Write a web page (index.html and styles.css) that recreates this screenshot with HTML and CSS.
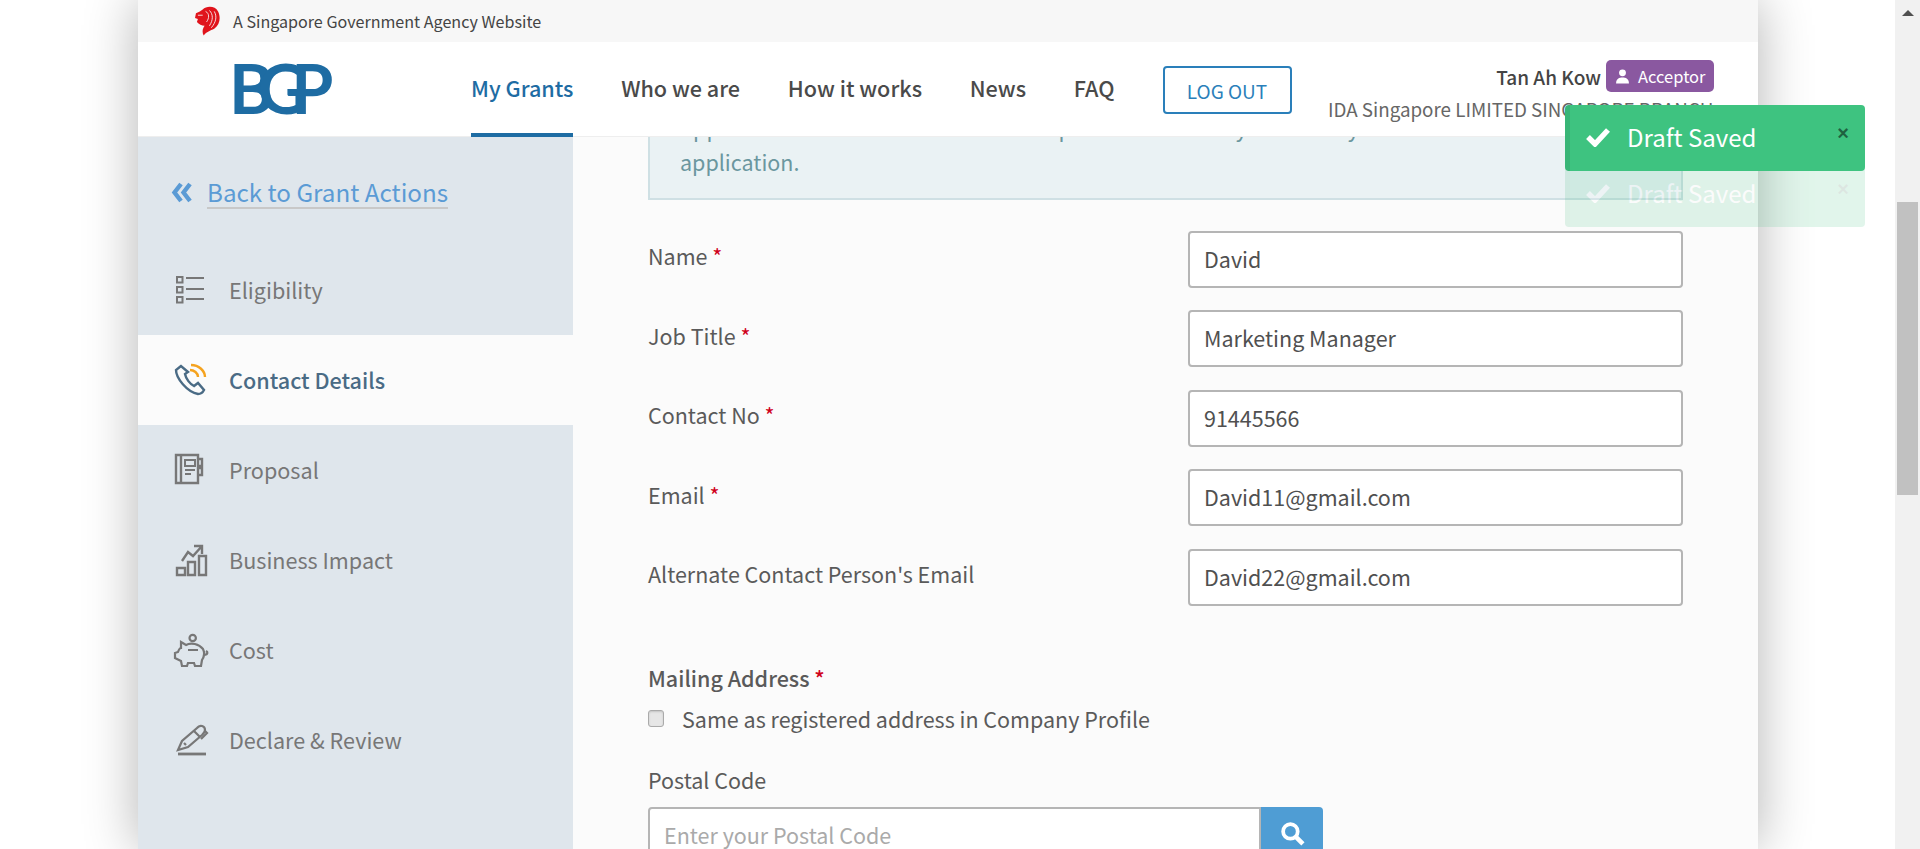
FILE: index.html
```html
<!DOCTYPE html>
<html lang="en">
<head>
    <meta charset="UTF-8">
    <meta name="viewport" content="width=device-width, initial-scale=1.0">
    <title>Business Grants Portal</title>
    <link rel="stylesheet" href="styles.css">
</head>
<body>
<div class="window">
    <div class="stage">
        <div class="page">

            <div class="gov-strip">
                <svg class="lion" viewBox="0 0 26 30">
                    <path fill="#e0141c" d="M8 3 C12 -1 21 -1 24 5 C27 11 26 19 20 23 C16 25 12 26 9 30 C7 26 8 23 10 20 C7 20 4 18 2 16 L3 13 L0 12 L1 7 L5 5 Z"/>
                    <path fill="none" stroke="#f7f7f7" stroke-width=".9" d="M11 5 C15 7 15 12 12 16 M15 4 C19 8 19 14 15 20 M20 5 C23 10 22 16 17 22 M3 9 L8 9"/>
                </svg>
                <span>A Singapore Government Agency Website</span>
            </div>

            <header class="top-bar">
                <div class="logo">BGP</div>
                <nav class="nav">
                    <a class="nav-link active">My Grants</a>
                    <a class="nav-link">Who we are</a>
                    <a class="nav-link">How it works</a>
                    <a class="nav-link">News</a>
                    <a class="nav-link">FAQ</a>
                </nav>
                <button class="logout">LOG OUT</button>
                <div class="user">
                    <div class="user-line">
                        <span class="user-name">Tan Ah Kow</span>
                        <span class="role">
                            <svg class="role-icon" viewBox="0 0 14 14"><circle cx="7" cy="3.6" r="3.2" fill="#fff"/><path fill="#fff" d="M1 13.5 C1 9 4 8 7 8 C10 8 13 9 13 13.5 Z"/></svg>
                            Acceptor
                        </span>
                    </div>
                    <div class="company">IDA Singapore LIMITED SINGAPORE BRANCH</div>
                </div>
            </header>

            <div class="body-row">
                <aside class="sidebar">
                    <a class="back">
                        <svg class="back-icon" viewBox="0 0 21 21"><path fill="none" stroke="#5b9bd5" stroke-width="4.4" d="M10 2 L3.5 10.5 L10 19 M19 2 L12.5 10.5 L19 19"/></svg>
                        <span class="back-text">Back to Grant Actions</span>
                    </a>
                    <a class="side-item">
                        <svg class="side-icon" viewBox="0 0 32 32" fill="none" stroke="#777" stroke-width="2">
                            <path d="M3 4h5.5v5.5H3zM3 14h5.5v5.5H3zM3 24h5.5v5.5H3z"/><path d="M12 5h18M12 16h18M12 26h18"/>
                        </svg>
                        <span>Eligibility</span>
                    </a>
                    <a class="side-item current">
                        <svg class="side-icon" viewBox="0 0 32 32" fill="none" stroke="#4a6b85" stroke-width="2.4">
                            <path d="M7 3 L2 7 C2 15 13 29 24 31 C27 31 29 29 30 27 L24 20 L20 23 C16 21 12 16 11 11 L14 9 Z"/>
                            <path stroke="#f5a31f" d="M16 7 C20 7 24 10 24 14 M17 2 C25 2 31 8 31 14"/>
                        </svg>
                        <span>Contact Details</span>
                    </a>
                    <a class="side-item">
                        <svg class="side-icon" viewBox="0 0 32 32" fill="none" stroke="#777" stroke-width="2.4">
                            <path d="M2 2h22v28H2zM7 2v28M24 6h4v7h-4M24 15h4v7h-4"/><path stroke-width="2" d="M11 7h10v6H11zM11 17h10M11 21h6"/>
                        </svg>
                        <span>Proposal</span>
                    </a>
                    <a class="side-item">
                        <svg class="side-icon" viewBox="0 0 32 32" fill="none" stroke="#777" stroke-width="2.4">
                            <path d="M3 25h8v7H3zM14 19h7v13h-7zM25 13h7v19h-7z"/><path d="M8 18 L14 9 L19 13 L28 3 M20 3h8v8"/>
                        </svg>
                        <span>Business Impact</span>
                    </a>
                    <a class="side-item">
                        <svg class="side-icon" viewBox="0 0 32 32" fill="none" stroke="#777" stroke-width="2.2">
                            <circle cx="18.7" cy="5" r="3.2"/>
                            <path d="M7 9 L12 12 C17 9 25 11 29 16 C31 20 30 24 28 27 L27 33 H21 L20 30 H14 L13 33 H8 L7 28 L1 25 V20 L4 19 C5 16 6 15 7 15 Z"/>
                            <path d="M14 17h10M32 18 C34 19 34 21 31 22"/>
                        </svg>
                        <span>Cost</span>
                    </a>
                    <a class="side-item">
                        <svg class="side-icon" viewBox="0 0 32 32" fill="none" stroke="#777" stroke-width="2.2">
                            <path d="M4 27 L8 18 L23 5 C26 1 31 3 31 7 C31 9 30 10 28 12 L14 24 Z"/><path d="M10 20 L12 22 M20 8 L26 14 M31 8 L33 10 L27 16"/><path stroke-width="2.8" d="M4 31h28"/>
                        </svg>
                        <span>Declare &amp; Review</span>
                    </a>
                </aside>

                <main class="content">
                    <div class="notice">
                        <div>Applicants must ensure that the main person here is fully advised by the board on this</div>
                        <div>application.</div>
                    </div>

                    <div class="form-rows">
                        <div class="form-row">
                            <label>Name <em>*</em></label>
                            <input class="field" value="David">
                        </div>
                        <div class="form-row">
                            <label>Job Title <em>*</em></label>
                            <input class="field" value="Marketing Manager">
                        </div>
                        <div class="form-row">
                            <label>Contact No <em>*</em></label>
                            <input class="field" value="91445566">
                        </div>
                        <div class="form-row">
                            <label>Email <em>*</em></label>
                            <input class="field" value="David11@gmail.com">
                        </div>
                        <div class="form-row">
                            <label>Alternate Contact Person's Email</label>
                            <input class="field" value="David22@gmail.com">
                        </div>
                    </div>

                    <div class="mailing-title">Mailing Address <em>*</em></div>
                    <label class="same-as"><input type="checkbox"> Same as registered address in Company Profile</label>
                    <div class="postal-label">Postal Code</div>
                    <div class="postal-group">
                        <input class="field postal-input" placeholder="Enter your Postal Code">
                        <button class="postal-btn">
                            <svg viewBox="0 0 24 24" width="25" height="25" fill="none" stroke="#fff"><circle cx="10" cy="10" r="7" stroke-width="3.6"/><path stroke-width="4.4" d="M15 15 L22 22"/></svg>
                        </button>
                    </div>
                </main>
            </div>
        </div>

        <div class="toast toast-old">
            <span class="toast-check"><svg viewBox="0 0 24 20"><path fill="none" stroke="#fff" stroke-width="5.4" d="M2 10 L9 17 L22 3"/></svg></span>
            <span class="toast-text">Draft Saved</span>
            <span class="toast-close">×</span>
        </div>
        <div class="toast">
            <span class="toast-check"><svg viewBox="0 0 24 20"><path fill="none" stroke="#fff" stroke-width="5.4" d="M2 10 L9 17 L22 3"/></svg></span>
            <span class="toast-text">Draft Saved</span>
            <span class="toast-close">×</span>
        </div>
    </div>

    <div class="scrollbar">
        <div class="scroll-up"></div>
        <div class="scroll-thumb"></div>
    </div>
</div>
</body>
</html>
```

FILE: styles.css
```css
html, body {
    margin: 0;
    height: 100%;
    overflow: hidden;
    font-family: "Noto Sans CJK SC", "Noto Sans", sans-serif;
    font-size: 21.5px;
    color: #5a5a5a;
    background-color: #fff;
}

a {
    text-decoration: none;
}

em {
    color: #d0021b;
    font-style: normal;
}

.window {
    display: flex;
    height: 849px;
}

.stage {
    position: relative;
    flex: 1;
    min-width: 0;
    overflow: hidden;
}

.page {
    display: flex;
    flex-direction: column;
    width: 1620px;
    height: 849px;
    margin-left: 138px;
    background-color: #fbfbfb;
    box-shadow: 0 0 50px rgba(0, 0, 0, .3);
}

/* top strip */
.gov-strip {
    display: flex;
    align-items: center;
    gap: 13px;
    height: 42px;
    padding-left: 57px;
    padding-bottom: 1px;
    box-sizing: border-box;
    font-size: 16.1px;
    color: #444;
    background-color: #f7f7f7;
}

.lion {
    width: 25px;
    height: 30px;
}

/* header */
.top-bar {
    display: flex;
    height: 95px;
    background-color: #fff;
    border-bottom: 1px solid #eee;
    box-sizing: border-box;
}

.logo {
    width: 333px;
    padding-left: 91px;
    box-sizing: border-box;
    font-family: "Lato", sans-serif;
    font-size: 68px;
    font-weight: 700;
    line-height: 92px;
    letter-spacing: -16px;
    color: #1e6ca3;
}

.nav {
    display: flex;
    gap: 47.7px;
}

.nav-link {
    font-size: 21.6px;
    font-weight: 500;
    line-height: 92px;
    color: #4a4a4a;
}

.nav-link.active {
    height: 91px;
    color: #1e6ca3;
    border-bottom: 4px solid #1e6ca3;
}

.logout {
    width: 129px;
    height: 48px;
    margin: 24px 0 0 48px;
    padding: 0;
    font-family: inherit;
    font-size: 19px;
    color: #2a7fba;
    background-color: #fff;
    border: 2px solid #2a7fba;
    border-radius: 4px;
}

.user {
    display: flex;
    flex-direction: column;
    align-items: flex-end;
    width: 422px;
    padding-top: 18px;
}

.user-line {
    display: flex;
    align-items: center;
    gap: 5px;
}

.user-name {
    font-size: 19px;
    font-weight: 500;
    color: #444;
}

.role {
    display: flex;
    align-items: center;
    gap: 8px;
    height: 32px;
    padding: 0 8px 0 9px;
    font-size: 16.5px;
    color: #fff;
    background-color: #8a58a0;
    border-radius: 5px;
}

.role-icon {
    width: 15px;
    height: 15px;
}

.company {
    margin-top: 3px;
    font-size: 18.8px;
    color: #666;
    white-space: nowrap;
}

/* sidebar + form */
.body-row {
    display: flex;
    flex: 1;
    min-height: 0;
}

.sidebar {
    flex: 0 0 435px;
    padding-top: 18px;
    box-sizing: border-box;
    background-color: #dfe6ec;
}

.back {
    display: flex;
    align-items: center;
    gap: 15px;
    height: 75px;
    margin-bottom: 15px;
    padding-left: 33px;
    font-size: 24.2px;
    color: #5b9bd5;
}

.back-icon {
    width: 21px;
    height: 21px;
}

.back-text {
    line-height: 30px;
    border-bottom: 2px solid #c8c8c8;
}

.side-item {
    display: flex;
    align-items: center;
    gap: 23px;
    height: 90px;
    padding-left: 36px;
    padding-bottom: 2px;
    box-sizing: border-box;
    font-size: 21.6px;
    color: #777;
}

.side-item.current {
    font-weight: 500;
    color: #4a6b85;
    background-color: #fbfbfb;
}

.side-icon {
    flex: none;
    width: 32px;
    height: 32px;
    overflow: visible;
}

.content {
    flex: 1;
    min-width: 0;
    padding-left: 75px;
    overflow: hidden;
}

/* first line of the notice has scrolled under the header */
.notice {
    box-sizing: border-box;
    width: 1035px;
    height: 100px;
    margin-top: -37px;
    padding: 9px 30px;
    line-height: 34px;
    color: #6b979f;
    white-space: nowrap;
    background-color: #eaf2f4;
    border: 2px solid #cfe0e4;
}

.form-rows {
    display: flex;
    flex-direction: column;
    gap: 22.5px;
    margin-top: 30.9px;
}

.form-row {
    display: grid;
    grid-template-columns: 540px 495px;
    align-items: center;
    height: 57px;
}

.form-row label {
    padding-bottom: 7px;
}

.field {
    box-sizing: border-box;
    width: 100%;
    height: 57px;
    padding: 0 14px 2px;
    font-family: inherit;
    font-size: 21.5px;
    color: #505050;
    background-color: #fff;
    border: 2px solid #b5b5b5;
    border-radius: 4px;
    outline: none;
}

.field::placeholder {
    color: #aaa;
}

.mailing-title {
    margin-top: 56px;
    font-weight: 500;
}

.same-as {
    display: flex;
    align-items: center;
    gap: 18px;
    margin-top: 10px;
}

.same-as input {
    appearance: none;
    box-sizing: border-box;
    width: 16px;
    height: 17px;
    margin: 0;
    background-color: #e6e6e6;
    border: 1px solid #aaa;
    border-radius: 3px;
    box-shadow: inset 0 1px 2px rgba(0, 0, 0, .15);
}

.postal-label {
    margin-top: 30px;
}

.postal-group {
    display: flex;
    width: 675px;
    margin-top: 12px;
}

.postal-input {
    flex: 1;
    border-radius: 4px 0 0 4px;
}

.postal-btn {
    width: 62px;
    height: 57px;
    padding: 0;
    background-color: #4f9dd4;
    border: 0;
    border-radius: 0 4px 4px 0;
}

/* toasts */
.toast {
    position: absolute;
    top: 105px;
    left: 1565px;
    display: flex;
    align-items: center;
    box-sizing: border-box;
    width: 300px;
    height: 66px;
    padding-left: 16px;
    padding-bottom: 3px;
    font-size: 24px;
    color: #fff;
    background-color: #3ec380;
    border-left: 5px solid #38b576;
    border-radius: 4px;
}

.toast-old {
    top: 161px;
    opacity: .15;
}

.toast-check {
    width: 24px;
    height: 20px;
    margin-right: 17px;
}

.toast-check svg {
    display: block;
    width: 24px;
    height: 20px;
}

.toast-close {
    position: absolute;
    top: 17px;
    right: 16px;
    font-family: "Liberation Sans", sans-serif;
    font-size: 20px;
    font-weight: 700;
    color: rgba(0, 0, 0, .5);
}

/* page scrollbar */
.scrollbar {
    flex: 0 0 25px;
    background-color: #f1f1f1;
}

.scroll-up {
    width: 0;
    height: 0;
    margin: 10px auto 0;
    border: 6px solid transparent;
    border-top: 0;
    border-bottom: 6px solid #505050;
}

.scroll-thumb {
    height: 293px;
    margin: 186px 2px 0;
    background-color: #c1c1c1;
}
```
